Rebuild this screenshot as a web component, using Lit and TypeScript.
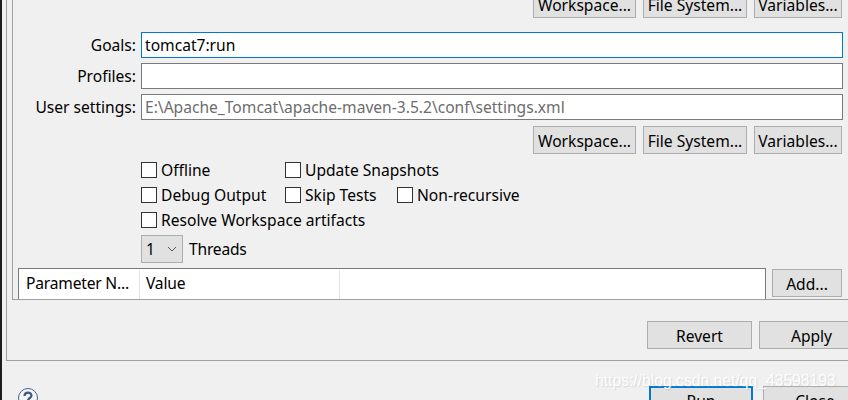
import { LitElement, html, css } from "lit";
import { customElement } from "lit/decorators.js";

@customElement("app-root")
export class AppRoot extends LitElement {
  static styles = css`
    :host {
      display: block;
      position: relative;
      width: 848px;
      height: 400px;
      overflow: hidden;
      background: #f0f0f0;
      font-family: "Noto Sans", "Open Sans", sans-serif;
      font-size: 15.6px;
      color: #000;
      box-sizing: border-box;
      border-left: 2px solid #1e1e1e;
    }
    * { box-sizing: border-box; }
    .outer {
      margin-left: 4px;
      height: 361px;
      border-left: 1px solid #a0a0a0;
      border-bottom: 1px solid #a0a0a0;
      padding-left: 5px;
      width: 900px;
    }
    .group {
      height: 300px;
      border-left: 1px solid #a0a0a0;
      border-bottom: 1px solid #a0a0a0;
      padding-left: 5px;
      width: 900px;
      display: flex;
      flex-direction: column;
    }
    .content { width: 825px; display: flex; flex-direction: column; }
    .btnrow { display: flex; justify-content: flex-end; gap: 7px; padding-right: 1px; }
    .btn {
      height: 28px;
      display: flex;
      align-items: center;
      justify-content: center;
      background: #e1e1e1;
      border: 1px solid #adadad;
      white-space: nowrap;
      flex: none;
      line-height: 1;
      padding-top: 3px;
    }
    .w { width: 103px; } .f { width: 104px; } .v { width: 88px; }
    .top { margin-top: -10px; }
    .fields { display: grid; grid-template-columns: 118px 702px; column-gap: 5px; row-gap: 5px; margin-top: 14px; margin-bottom: 6px; }
    .lbl { text-align: right; line-height: 26px; white-space: nowrap; }
    .input {
      height: 26px;
      background: #fff;
      border: 1px solid #7a7a7a;
      padding-left: 3px;
      line-height: 24px;
      white-space: nowrap;
    }
    .focus { border-color: #0078d7; }
    .ro { color: #6d6d6d; }
    .opts { margin: 8px 0 0 123px; display: grid; grid-template-columns: 144px 112px auto; grid-auto-rows: 25px; justify-content: start; }
    .cb { display: flex; align-items: center; gap: 4px; white-space: nowrap; height: 16px; line-height: 16px; }
    .cb i { width: 16px; height: 16px; background: #fff; border: 1px solid #333; display: block; flex: none; }
    .span { grid-column: 1 / -1; }
    .threads { display: flex; align-items: center; gap: 6px; margin: -2px 0 0 123px; height: 28px; letter-spacing: -0.2px; }
    .combo {
      width: 42px; height: 28px;
      background: #e1e1e1;
      border: 1px solid #adadad;
      display: flex; align-items: center; justify-content: space-between;
      padding: 0 5px 0 4px;
    }
    .tablerow { display: flex; margin-top: 5px; height: 31px; gap: 6px; }
    .table {
      width: 748px;
      height: 31px;
      background: #fff;
      border-left: 1px solid #7a7a7a;
      border-top: 1px solid #7a7a7a;
      border-right: 1px solid #7a7a7a;
      display: flex;
    }
    .th { border-right: 1px solid #e5e5e5; white-space: nowrap; height: 29px; margin-top: 1px; line-height: 27px; letter-spacing: -0.2px; }
    .th1 { width: 121px; padding-left: 7px; }
    .th2 { width: 200px; padding-left: 6px; }
    .add { width: 70px; margin-top: 1px; }
    .revert { width: 105px; }
    .apply { width: 105px; }
    .applywrap { display: flex; gap: 7px; padding-left: 635px; margin-top: 21px; }
    .footer { display: flex; align-items: flex-start; margin-top: 25px; margin-left: 16px; }
    .help { flex: none; display: block; margin-top: 2px; }
    .fbtns { display: flex; gap: 10px; margin-left: 611px; }
    .run { width: 104px; height: 28px; border: 2px solid #0078d7; }
    .close { width: 104px; }
    .wm {
      position: absolute;
      left: 593px;
      top: 372px;
      font-family: "Liberation Sans", Arial, sans-serif;
      font-size: 15.7px;
      color: rgba(255,255,255,.95);
      text-shadow: 1px 1px 1px rgba(170,170,170,.35);
      white-space: nowrap;
    }
  `;

  render() {
    return html`
      <div class="outer">
        <div class="group">
          <div class="content">
            <div class="btnrow top">
              <div class="btn w">Workspace...</div><div class="btn f">File System...</div><div class="btn v">Variables...</div>
            </div>
            <div class="fields">
              <div class="lbl">Goals:</div><div class="input focus">tomcat7:run</div>
              <div class="lbl">Profiles:</div><div class="input"></div>
              <div class="lbl">User settings:</div><div class="input ro">E:\\Apache_Tomcat\\apache-maven-3.5.2\\conf\\settings.xml</div>
            </div>
            <div class="btnrow">
              <div class="btn w">Workspace...</div><div class="btn f">File System...</div><div class="btn v">Variables...</div>
            </div>
            <div class="opts">
              <label class="cb"><i></i>Offline</label>
              <label class="cb"><i></i>Update Snapshots</label>
              <span></span>
              <label class="cb"><i></i>Debug Output</label>
              <label class="cb"><i></i>Skip Tests</label>
              <label class="cb"><i></i>Non-recursive</label>
              <label class="cb span"><i></i>Resolve Workspace artifacts</label>
            </div>
            <div class="threads">
              <div class="combo"><span>1</span>
                <svg width="10" height="6" viewBox="0 0 10 6"><path d="M1 1l4 4 4-4" fill="none" stroke="#555" stroke-width="1"/></svg>
              </div>
              <span>Threads</span>
            </div>
            <div class="tablerow">
              <div class="table">
                <div class="th th1">Parameter N...</div>
                <div class="th th2">Value</div>
              </div>
              <div class="btn add">Add...</div>
            </div>
          </div>
        </div>
        <div class="applywrap">
          <div class="btn revert">Revert</div><div class="btn apply">Apply</div>
        </div>
      </div>
      <div class="footer">
        <svg class="help" width="20" height="20" viewBox="0 0 20 20">
          <circle cx="10" cy="10" r="9.5" fill="#f4f6f9" stroke="#4a6285" stroke-width="1"/>
          <path d="M6.5 8 C6.5 3.5 13.5 3.5 13.5 7.5 C13.5 10 10 10 10 12.5" fill="none" stroke="#3f5a82" stroke-width="2.2"/>
        </svg>
        <div class="fbtns">
          <div class="btn run">Run</div><div class="btn close">Close</div>
        </div>
      </div>
      <div class="wm">https://blog.csdn.net/qq_43598193</div>
    `;
  }
}
